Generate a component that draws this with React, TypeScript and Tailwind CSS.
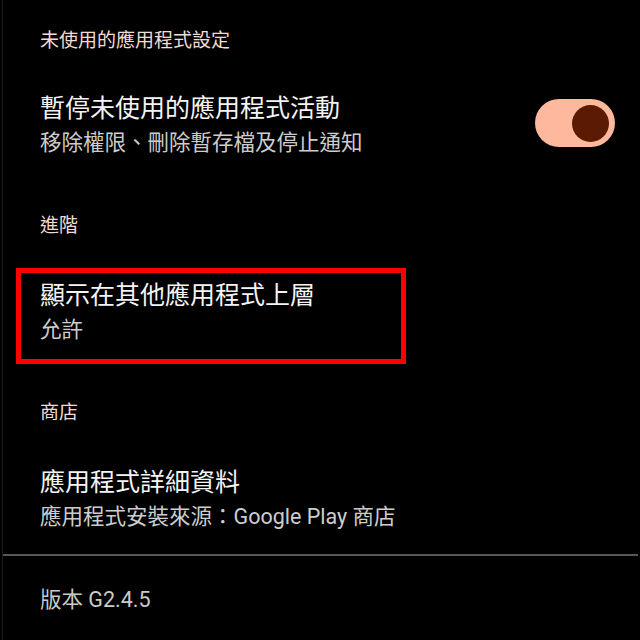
const FONT = "font-['Roboto','Noto_Sans_CJK_TC',sans-serif]";

function SectionHeader({ label, className }: { label: string; className: string }) {
  return (
    <div className={`pl-[37px] text-[19px] leading-[24px] text-[#f3dcd2] ${className}`}>{label}</div>
  );
}

function ItemText({ title, summary }: { title: string; summary: string }) {
  return (
    <div className="flex flex-col gap-[6px]">
      <div className="text-[25px] leading-[30px] text-[#f4f4f4]">{title}</div>
      <div className="text-[21.5px] leading-[26px] text-[#cdcdcd]">{summary}</div>
    </div>
  );
}

function Toggle({ on }: { on: boolean }) {
  return (
    <div
      className={`flex h-[48px] w-[80px] items-center rounded-full px-[6px] ${
        on ? "justify-end bg-[#fdb89e]" : "justify-start bg-[#3a3a3a]"
      }`}
    >
      <div className={`h-[37px] w-[37px] rounded-full ${on ? "bg-[#5b1b02]" : "bg-[#8a8a8a]"}`} />
    </div>
  );
}

export default function App() {
  return (
    <div className={`h-[640px] w-[640px] overflow-hidden bg-black ${FONT}`}>
      <div className="h-full border-l border-[#1c1c1c] ml-[2px]">
        <SectionHeader label="未使用的應用程式設定" className="pt-[29px]" />

        {/* pause unused app activity */}
        <div className="mt-[41px] flex items-center justify-between pl-[37px] pr-[25px]">
          <ItemText title="暫停未使用的應用程式活動" summary="移除權限、刪除暫存檔及停止通知" />
          <div className="-mt-[4px]">
            <Toggle on />
          </div>
        </div>

        <SectionHeader label="進階" className="mt-[58px]" />

        {/* highlighted row (red annotation box) */}
        <div className="ml-[13px] mt-[30px] w-[390px] border-[5px] border-[#ff0000] pb-[16px] pl-[19px] pt-[8px]">
          <ItemText title="顯示在其他應用程式上層" summary="允許" />
        </div>

        <SectionHeader label="商店" className="mt-[37px]" />

        <div className="mt-[43px] pl-[37px]">
          <ItemText title="應用程式詳細資料" summary="應用程式安裝來源：Google Play 商店" />
        </div>

        <div className="mt-[24px] mr-[2px] h-[2px] bg-[#56565c]" />

        <div className="mt-[31px] pl-[37px] text-[21.5px] leading-[26px] text-[#cacaca]">版本 G2.4.5</div>
      </div>
    </div>
  );
}
